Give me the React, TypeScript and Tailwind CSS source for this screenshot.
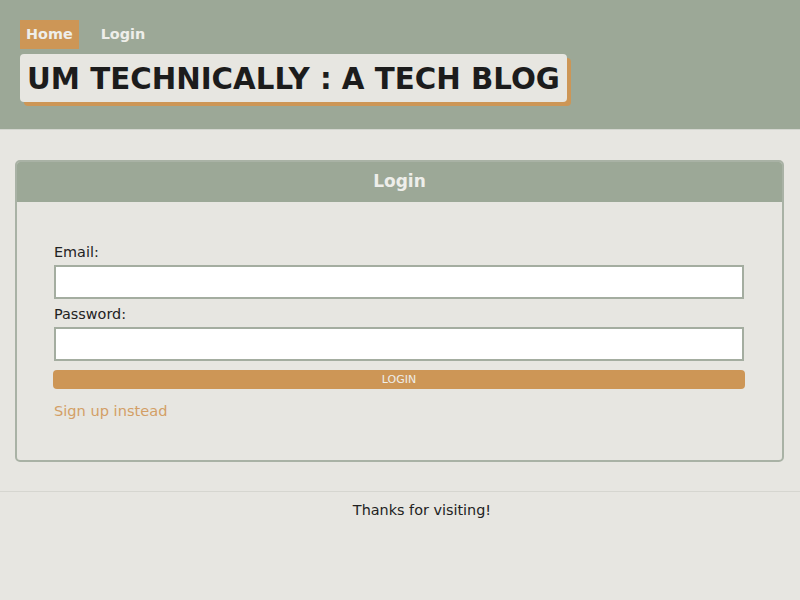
export default function App() {
  return (
    <div className="min-h-screen bg-[#e7e6e1] text-[#222] font-['DejaVu_Sans',Verdana,sans-serif]">
      <header className="h-[130px] border-b border-[#d3d6cf] bg-[#9ca897] px-5 pt-5">
        <nav className="flex items-center gap-[16px]">
          <a className="flex h-[29px] items-center bg-[#cd9656] px-[6px] text-[14.4px] font-bold text-[#eeeeea]">Home</a>
          <a className="flex h-[29px] items-center px-[6px] text-[14.4px] font-bold text-[#eeeeea]">Login</a>
        </nav>
        <div className="mt-[5px] inline-flex h-[48px] items-center rounded-[4px] bg-[#e7e6e1] px-[7px] pt-[3px] shadow-[4px_4px_0_#cd9656]">
          <h1 className="text-[29.3px] font-bold leading-none text-[#1c1c1c]">UM TECHNICALLY : A TECH BLOG</h1>
        </div>
      </header>

      <main className="pl-[15px] pr-[16px] pt-[30px]">
        <section className="overflow-hidden rounded-[5px] border-2 border-[#a9b2a5]">
          <div className="flex h-[40px] items-center justify-center bg-[#9ca897]">
            <h2 className="text-[17px] font-bold text-[#eeeeea]">Login</h2>
          </div>
          <form className="flex flex-col pb-[38px] pl-[37px] pr-[38px] pt-[41px]" onSubmit={(e) => e.preventDefault()}>
            <label className="pb-[4px] text-[14.4px] leading-[18px]">Email:</label>
            <input type="email" className="h-[34px] w-full border-2 border-[#a4ada0] bg-white px-2 outline-none" />
            <label className="mt-[6px] pb-[4px] text-[14.4px] leading-[18px]">Password:</label>
            <input type="password" className="h-[34px] w-full border-2 border-[#a4ada0] bg-white px-2 outline-none" />
            <button className="-ml-px mt-[9px] h-[19px] w-[calc(100%+2px)] rounded-[4px] bg-[#cd9656] text-[11px] leading-none text-[#eeeeea]">LOGIN</button>
            <a className="mt-[11px] text-[14.6px] leading-[22px] text-[#d39f66]">Sign up instead</a>
          </form>
        </section>
      </main>

      <footer className="mt-[29px] border-t border-[#d6d6d0] pl-[44px] pt-[7px] text-center text-[14.4px] leading-[22px]">
        Thanks for visiting!
      </footer>
    </div>
  );
}
